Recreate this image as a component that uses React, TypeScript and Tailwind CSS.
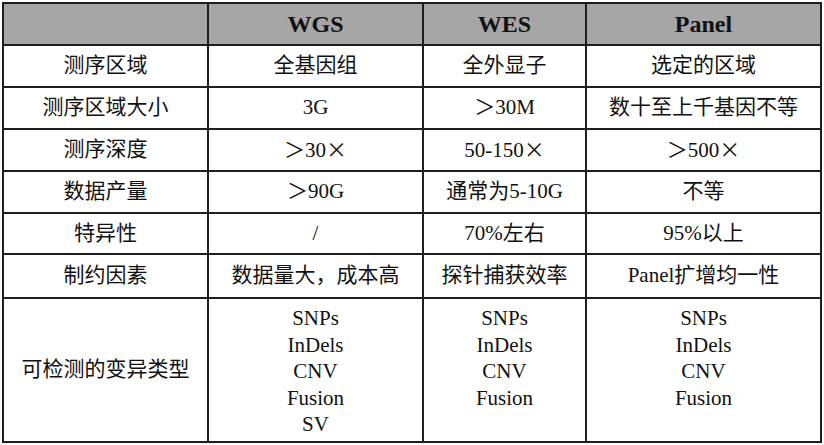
const X = () => <span className="font-[family-name:'Noto_Sans_CJK_JP',sans-serif]">×</span>

const rows: { label: string; cells: React.ReactNode[]; h: string }[] = [
  { label: '测序区域', cells: ['全基因组', '全外显子', '选定的区域'], h: 'h-[42px]' },
  { label: '测序区域大小', cells: ['3G', '＞30M', '数十至上千基因不等'], h: 'h-[42px]' },
  {
    label: '测序深度',
    cells: [<>＞30<X /></>, <>50-150<X /></>, <>＞500<X /></>],
    h: 'h-[42px]',
  },
  { label: '数据产量', cells: ['＞90G', '通常为5-10G', '不等'], h: 'h-[42px]' },
  { label: '特异性', cells: ['/', '70%左右', '95%以上'], h: 'h-[41px]' },
  { label: '制约因素', cells: ['数据量大，成本高', '探针捕获效率', 'Panel扩增均一性'], h: 'h-[44px]' },
]

const variants = [
  ['SNPs', 'InDels', 'CNV', 'Fusion', 'SV'],
  ['SNPs', 'InDels', 'CNV', 'Fusion'],
  ['SNPs', 'InDels', 'CNV', 'Fusion'],
]

const cell = 'border-2 border-[#1e1e1e] text-center align-middle p-0'

export default function App() {
  return (
    <div className="w-[824px] h-[445px] bg-white pl-[2px] pt-[2px] font-[family-name:'Liberation_Serif','Noto_Sans_CJK_SC',serif] text-[21px] text-[#111]">
      <table className="border-collapse table-fixed w-[818px]">
        <colgroup>
          <col className="w-[205px]" />
          <col className="w-[215px]" />
          <col className="w-[163px]" />
          <col className="w-[235px]" />
        </colgroup>
        <thead>
          <tr className="h-[42px] bg-[#a6a6a6]">
            <th className={cell}></th>
            <th className={`${cell} text-[24px] font-bold`}>WGS</th>
            <th className={`${cell} text-[24px] font-bold`}>WES</th>
            <th className={`${cell} text-[24px] font-bold`}>Panel</th>
          </tr>
        </thead>
        <tbody>
          {rows.map((r) => (
            <tr key={r.label} className={r.h}>
              <td className={cell}>{r.label}</td>
              {r.cells.map((c, i) => (
                <td key={i} className={cell}>{c}</td>
              ))}
            </tr>
          ))}
          <tr className="h-[144px]">
            <td className={cell}>可检测的变异类型</td>
            {variants.map((list, i) => (
              <td key={i} className={`${cell} align-top pt-[6px] leading-[26.5px]`}>
                {list.map((v) => (
                  <div key={v}>{v}</div>
                ))}
              </td>
            ))}
          </tr>
        </tbody>
      </table>
    </div>
  )
}
